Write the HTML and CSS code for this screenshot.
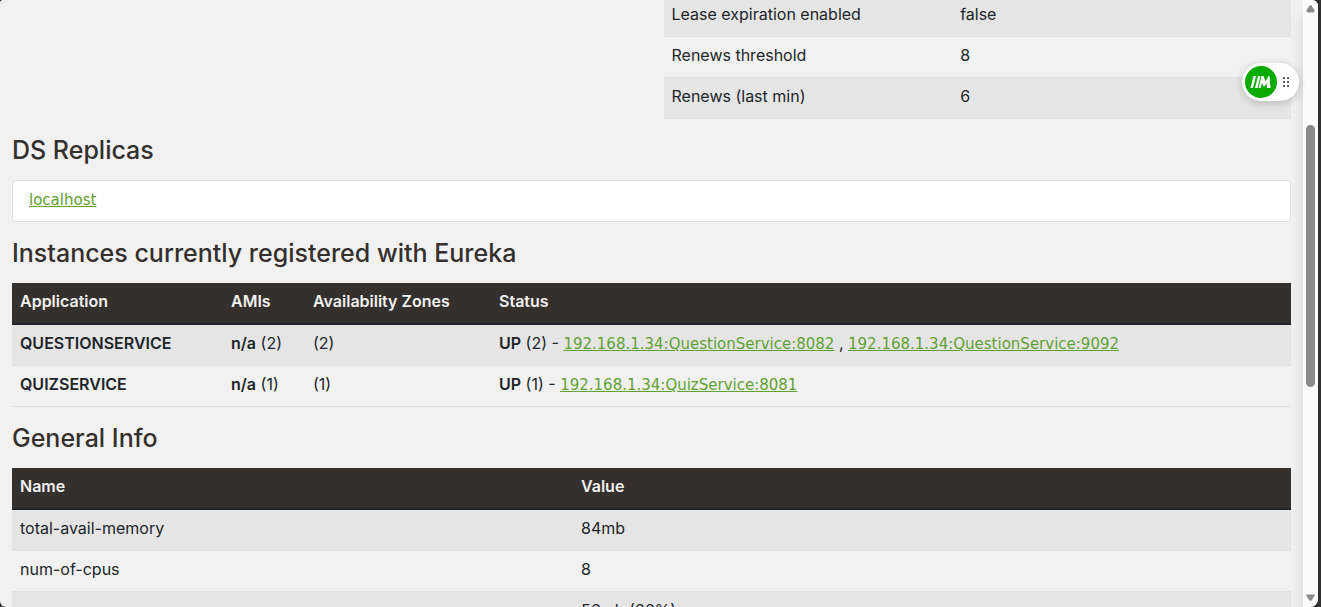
FILE: index.html
```html
<!DOCTYPE html>
<html lang="en">
<head>
<meta charset="utf-8">
<title>Eureka</title>
<link rel="stylesheet" href="styles.css">
</head>
<body>
<div class="window">
  <main class="page">
    <div class="split">
      <div></div>
      <table class="table status">
        <colgroup><col class="status-key"><col></colgroup>
        <tbody>
          <tr class="shade clipped"><td>Lease expiration enabled</td><td>false</td></tr>
          <tr><td>Renews threshold</td><td>8</td></tr>
          <tr class="shade"><td>Renews (last min)</td><td>6</td></tr>
        </tbody>
      </table>
    </div>

    <h1>DS Replicas</h1>
    <ul class="replicas"><li><a href="#">localhost</a></li></ul>

    <h1>Instances currently registered with Eureka</h1>
    <table class="table">
      <colgroup><col class="app"><col class="amis"><col class="zones"><col></colgroup>
      <thead><tr><th>Application</th><th>AMIs</th><th>Availability Zones</th><th>Status</th></tr></thead>
      <tbody>
        <tr class="shade"><td><b>QUESTIONSERVICE</b></td><td><b>n/a</b> (2)</td><td>(2)</td><td><b>UP</b> (2) - <a href="#">192.168.1.34:QuestionService:8082</a> , <a href="#">192.168.1.34:QuestionService:9092</a></td></tr>
        <tr><td><b>QUIZSERVICE</b></td><td><b>n/a</b> (1)</td><td>(1)</td><td><b>UP</b> (1) - <a href="#">192.168.1.34:QuizService:8081</a></td></tr>
      </tbody>
    </table>

    <h1>General Info</h1>
    <table class="table">
      <colgroup><col class="info-name"><col></colgroup>
      <thead><tr><th>Name</th><th>Value</th></tr></thead>
      <tbody>
        <tr class="shade"><td>total-avail-memory</td><td>84mb</td></tr>
        <tr><td>num-of-cpus</td><td>8</td></tr>
        <tr class="shade"><td></td><td>56mb (66%)</td></tr>
      </tbody>
    </table>
  </main>
  <div class="scrollbar">
    <svg width="15" height="14" viewBox="0 0 15 14"><path d="M7.500 5 L11 10 Q11.500 12 10 12 H5 Q3.500 12 4 10 Z" fill="#8b8b8b" stroke="#8b8b8b" stroke-linejoin="round"/></svg>
    <div class="track"><div class="thumb"></div></div>
    <svg width="15" height="14" viewBox="0 0 15 14"><path d="M3.500 2 H11.500 L8.500 7 Q7.500 8 6.500 7 Z" fill="#8b8b8b" stroke="#8b8b8b" stroke-linejoin="round"/></svg>
  </div>
</div>
<div class="widget">
  <svg width="32" height="32" viewBox="0 0 32 32"><circle cx="16" cy="16" r="16" fill="#0aab00"/><path d="M8.500 10 H11 L8 22 H5.500 Z M13 10 H15.500 L12.500 22 H10 Z M16.500 10 H18.500 L20.500 15.500 L23.500 10 H24.500 L25.500 22 H22 L21.500 17 L20 20 H18.500 L17 17 L15.500 22 H13.500 Z" fill="#fff"/></svg>
  <svg width="6" height="10" viewBox="0 0 6 10" fill="#5d5e63"><path d="M0 0h2v2H0zM4 0h2v2H4zM0 4h2v2H0zM4 4h2v2H4zM0 8h2v2H0zM4 8h2v2H4z"/></svg>
</div>
</body>
</html>
```
FILE: styles.css
```css
* { box-sizing: border-box; }
body {
  margin: 0;
  height: 100vh;
  overflow: hidden;
  background: #303030;
  color: #212529;
  font: 16px/24px Inter, "Noto Sans", sans-serif;
}
.window {
  display: flex;
  height: 100vh;
  margin-right: 3px;
  overflow: hidden;
  border-radius: 3px 6px 8px 6px;
  background: #f1f1f1;
}
.page { flex: 1; min-width: 0; padding: 0 12px; }
.split {
  display: grid;
  grid-template-columns: 1fr 1fr;
  gap: 24px;
}
h1 {
  margin: 0;
  padding: 17px 0 15px;
  color: #34302d;
  font: 500 25px/29px Inter, "Noto Sans", sans-serif;
}
a {
  color: #5fa134;
  font-family: "DejaVu Sans", sans-serif;
  font-size: 15px;
  line-height: 20px;
}
b, th { font-weight: 600; }
.table {
  width: 100%;
  table-layout: fixed;
  border-spacing: 0;
}
.table td, .table th {
  padding: 6px 8px 10px;
  text-align: left;
  white-space: nowrap;
}
.table td { border-bottom: 1px solid #dfe0e2; }
.table th {
  background: #34302d;
  border-bottom: 2px solid #212529;
  color: #f1f1f1;
}
.shade td { background: #e5e5e5; }
.table .clipped td { padding-top: 2px; }
.status-key { width: 46%; }
.app { width: 211px; }
.amis { width: 82px; }
.zones { width: 186px; }
.info-name { width: 561px; }
.replicas {
  margin: 0;
  padding: 6px 16px 10px;
  border: 1px solid #dfdfdf;
  border-radius: 4px;
  background: #fff;
  list-style: none;
}
.scrollbar {
  display: flex;
  flex-direction: column;
  width: 15px;
  background: #fcfcfc;
  box-shadow: 0 16px 14px rgba(0, 0, 0, 0.13);
}
.track { flex: 1; padding-top: 111px; }
.thumb {
  width: 9px;
  height: 56%;
  margin: 0 auto;
  border-radius: 5px;
  background: #8b8b8b;
}
.widget {
  position: absolute;
  top: 63px;
  right: 22px;
  display: flex;
  align-items: center;
  gap: 6px;
  padding: 3px 10px 3px 3px;
  border-radius: 19px;
  background: #fff;
  box-shadow: 0 2px 8px rgba(0, 0, 0, 0.2);
}
```
